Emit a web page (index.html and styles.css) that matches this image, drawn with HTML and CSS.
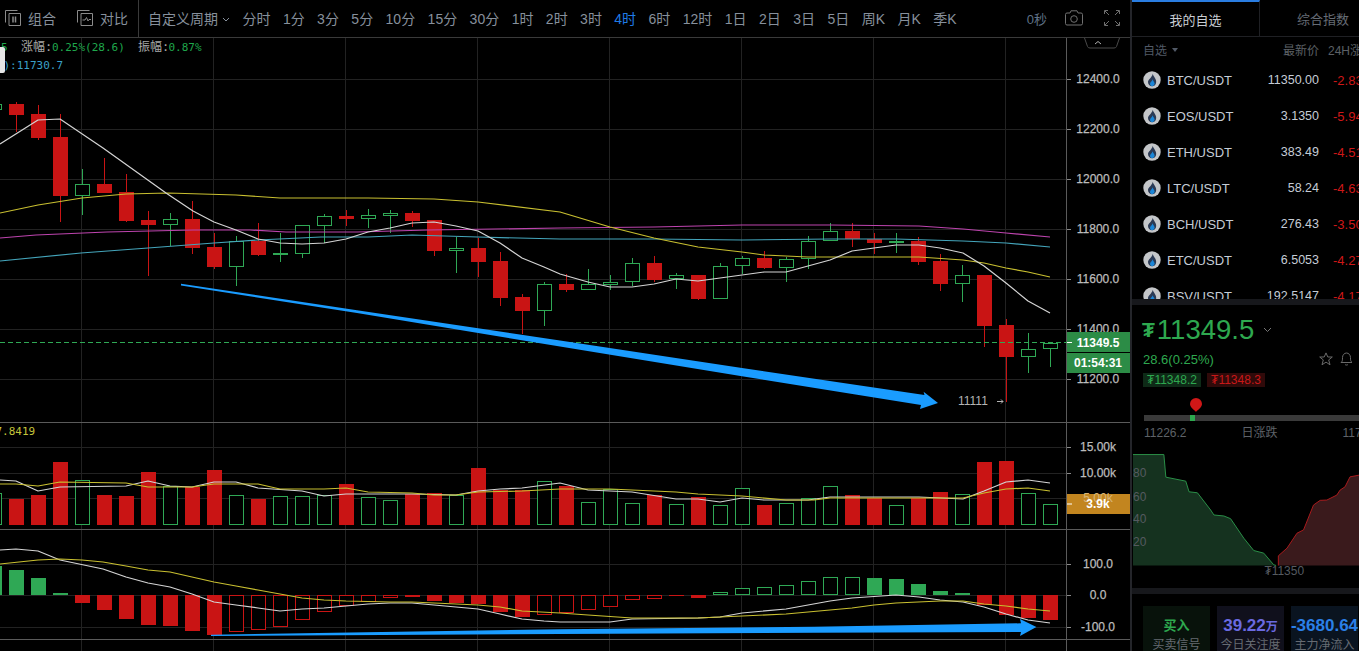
FILE: index.html
```html
<!DOCTYPE html>
<html lang="zh">
<head>
<meta charset="utf-8">
<title>BTC/USDT</title>
<link rel="stylesheet" href="styles.css">
</head>
<body>
<svg class="defs" width="0" height="0" aria-hidden="true">
  <symbol id="coin" viewBox="0 0 18 18">
    <circle cx="9" cy="9" r="8.7" fill="#c4c6c9"/>
    <path d="M9.8 2.8C10.2 5.6 13.2 7.4 13.2 10.9 13.2 13.6 11.2 15.2 9 15.2 6.8 15.2 5 13.6 5 11 5 8.4 8.9 6.8 9.8 2.8Z" fill="#2b3a55"/>
    <path d="M9.6 8.2C10 9.9 11.6 10.9 11.6 12.6 11.6 14.1 10.4 15.2 9.2 15.2 8 15.2 7 14.1 7 12.9 7 11 9.1 10.4 9.6 8.2Z" fill="#1a86d8"/>
  </symbol>
</svg>
<div class="app">
  <main class="main">
    <header class="toolbar">
      <div class="tools">
        <div class="tool">
          <svg class="tool-icon" viewBox="0 0 16 16"><path d="M12.5.5H.5V12.5M4 3.5H15.500V15.500H4Z" fill="none" stroke="#8b8b8b"/><path d="M8 6.500V12.500M10.500 6.500V12.500" stroke="#8b8b8b" stroke-width="1.500"/></svg>
          <span>组合</span>
        </div>
        <div class="tool tool-second">
          <svg class="tool-icon" viewBox="0 0 16 16"><path d="M12.500.5H.5V12.500M4 3.500H15.500V15.500H4Z" fill="none" stroke="#8b8b8b"/><path d="M5.500 10H8L9.500 7.500 11 11 12 9.500H14" fill="none" stroke="#8b8b8b"/></svg>
          <span>对比</span>
        </div>
      </div>
      <nav class="periods">
        <span class="custom">自定义周期<svg class="chevron" viewBox="0 0 8 5"><path d="M1 1L4 4 7 1" fill="none" stroke="#87909c"/></svg></span>
        <span>分时</span><span>1分</span><span>3分</span><span>5分</span><span>10分</span><span>15分</span><span>30分</span><span>1时</span><span>2时</span><span>3时</span><span class="active">4时</span><span>6时</span><span>12时</span><span>1日</span><span>2日</span><span>3日</span><span>5日</span><span>周K</span><span>月K</span><span>季K</span>
      </nav>
      <div class="tool-right">
        <span class="seconds">0秒</span>
        <svg class="camera" viewBox="0 0 20 16"><path d="M1.500 4.500A1.500 1.500 0 0 1 3 3H6L7 .8H13L14 3H17A1.500 1.500 0 0 1 18.500 4.500V13.500A1.500 1.500 0 0 1 17 15H3A1.500 1.500 0 0 1 1.500 13.500Z" fill="none" stroke="#707070"/><circle cx="10" cy="9" r="3.300" fill="none" stroke="#707070"/></svg>
        <svg class="expand" viewBox="0 0 16 16"><path d="M.5 4V.5H4M12 .5H15.500V4M.5 12V15.500H4M12 15.500H15.500V12M1 1L5 5M15 1L11 5M1 15L5 11M15 15L11 11" fill="none" stroke="#6e6e6e"/></svg>
      </div>
    </header>
    <div class="chart">
      <svg id="plot" class="plot" viewBox="0 38 1130 613"></svg>
    </div>
  </main>
  <aside class="side">
    <div class="tabs">
      <div class="tab tab-active">我的自选</div>
      <div class="tab">综合指数</div>
    </div>
    <section class="market">
      <div class="market-head">
        <span class="head-own">自选<i class="caret"></i></span>
        <span class="head-price">最新价</span>
        <span class="head-change">24H涨跌</span>
      </div>
      <div class="row"><svg class="coin"><use href="#coin"/></svg><span class="name">BTC/USDT</span><span class="price">11350.00</span><span class="change">-2.83%</span></div>
      <div class="row"><svg class="coin"><use href="#coin"/></svg><span class="name">EOS/USDT</span><span class="price">3.1350</span><span class="change">-5.94%</span></div>
      <div class="row"><svg class="coin"><use href="#coin"/></svg><span class="name">ETH/USDT</span><span class="price">383.49</span><span class="change">-4.51%</span></div>
      <div class="row"><svg class="coin"><use href="#coin"/></svg><span class="name">LTC/USDT</span><span class="price">58.24</span><span class="change">-4.63%</span></div>
      <div class="row"><svg class="coin"><use href="#coin"/></svg><span class="name">BCH/USDT</span><span class="price">276.43</span><span class="change">-3.50%</span></div>
      <div class="row"><svg class="coin"><use href="#coin"/></svg><span class="name">ETC/USDT</span><span class="price">6.5053</span><span class="change">-4.27%</span></div>
      <div class="row"><svg class="coin"><use href="#coin"/></svg><span class="name">BSV/USDT</span><span class="price">192.5147</span><span class="change">-4.17%</span></div>
    </section>
    <div class="gutter"></div>
    <section class="quote">
      <div class="big-price"><span class="tug">₮</span><span>11349.5</span><svg class="big-chevron" viewBox="0 0 9 6"><path d="M1 1L4.500 4.500 8 1" fill="none" stroke="#777"/></svg></div>
      <div class="delta">
        <span>28.6(0.25%)</span>
        <svg class="star" viewBox="0 0 14 14"><path d="M7 .9L8.800 5H13.300L9.700 7.900 11 12.800 7 10.100 3 12.800 4.300 7.900.7 5H5.200Z" fill="none" stroke="#6a6a6a"/></svg>
        <svg class="bell" viewBox="0 0 13 14"><path d="M1 10.500C2.500 9.500 2.500 8 2.500 5.500 2.500 3 4.300 1 6.500 1S10.500 3 10.500 5.500C10.500 8 10.500 9.500 12 10.500ZM5 12.300C5.500 13.300 7.500 13.300 8 12.300" fill="none" stroke="#6a6a6a"/></svg>
      </div>
      <div class="badges"><span class="badge badge-buy">₮11348.2</span><span class="badge badge-sell">₮11348.3</span></div>
      <div class="range">
        <span class="range-mark"></span>
        <svg class="pin" viewBox="0 0 12 14"><path d="M6 14C5 12.500 0 9.500 0 6A6 6 0 0 1 12 6C12 9.500 7 12.500 6 14Z" fill="#d01717"/></svg>
      </div>
      <div class="range-labels"><span>11226.2</span><span class="label-mid">日涨跌</span><span class="label-end">11718.5</span></div>
      <svg class="depth" viewBox="1131 439 228 149">
        <path class="depth-buy" d="M1132 454.300H1163L1165 477 1185 481 1188.300 491.700 1196.700 492.700 1210 510 1213.300 515 1223.300 516 1230 518.700 1243.300 538.300 1253.300 550.700 1263.300 553.300 1273.300 565 1275.700 565.700H1132Z"/>
        <path class="depth-buy-line" d="M1132 454.300H1163L1165 477 1185 481 1188.300 491.700 1196.700 492.700 1210 510 1213.300 515 1223.300 516 1230 518.700 1243.300 538.300 1253.300 550.700 1263.300 553.300 1273.300 565 1275.700 565.700"/>
        <path class="depth-sell" d="M1278 565.700V556L1286.700 548.300 1296.700 533.300 1303.300 530 1313.300 505 1320 500.300 1326.700 500 1336.700 495 1340 490 1345 486.700 1350 476.700 1359 475V565.700Z"/>
        <path class="depth-sell-line" d="M1278 565.700V556L1286.700 548.300 1296.700 533.300 1303.300 530 1313.300 505 1320 500.300 1326.700 500 1336.700 495 1340 490 1345 486.700 1350 476.700 1359 475"/>
        <g class="depth-labels"><text x="1132" y="477">80</text><text x="1132" y="501">60</text><text x="1132" y="523">40</text><text x="1132" y="546">20</text><text x="1264" y="575">₮11350</text></g>
      </svg>
    </section>
    <div class="gutter"></div>
    <section class="cards">
      <div class="card card-buy"><strong>买入</strong><span>买卖信号</span></div>
      <div class="card card-focus"><strong>39.22<small>万</small></strong><span>今日关注度</span></div>
      <div class="card card-flow"><strong>-3680.64</strong><span>主力净流入</span></div>
    </section>
  </aside>
</div>
<script src="chart.js"></script>
</body>
</html>
```
FILE: styles.css
```css
* { box-sizing: border-box; }
html, body { margin: 0; height: 100%; background: #000; overflow: hidden; }
body { font-family: "Liberation Sans", "Noto Sans CJK SC", sans-serif; color: #87909c; }
.defs { display: block; height: 0; }
.app { display: flex; width: 1359px; height: 651px; overflow: hidden; }

.main { width: 1130px; flex: none; display: flex; flex-direction: column; }
.toolbar { height: 38px; flex: none; display: flex; align-items: stretch; border-bottom: 1px solid #3a3a3a; font-size: 14px; white-space: nowrap; }
.tools { display: flex; align-items: center; padding: 0 10px 1px 5px; border-right: 1px solid #3a3a3a; }
.tool { display: flex; align-items: center; gap: 7px; }
.tool-second { margin-left: 21px; }
.tool-icon { width: 16px; height: 16px; display: block; }
.periods { display: flex; align-items: center; gap: 12.45px; padding: 0 0 1px 9px; }
.custom { display: flex; align-items: center; }
.chevron { width: 8px; height: 5px; margin-left: 4px; margin-top: 2px; }
.active { color: #1f7be6; }
.tool-right { margin-left: auto; display: flex; align-items: center; padding: 0 10px 1px 0; }
.seconds { font-size: 13px; color: #5f7186; margin-right: 17px; }
.camera { width: 20px; height: 16px; margin-right: 20px; }
.expand { width: 16px; height: 16px; }

.chart { position: relative; flex: 1; min-height: 0; overflow: hidden; }
.plot { display: block; width: 1130px; height: 613px; }
.grid { stroke: #222; stroke-width: 1; }
.rule { stroke: #5a5a5a; stroke-width: 1; }
.tick { stroke: #8a8a8a; stroke-width: 1; }
.line { fill: none; stroke-width: 1.2; stroke-linejoin: round; }
.l-white { stroke: #d4d4d4; }
.l-yellow { stroke: #c8bf30; }
.l-magenta { stroke: #bd44ae; }
.l-cyan { stroke: #44a5bb; }
.last { stroke: #2fa855; stroke-dasharray: 5 3; }
.up-fill { fill: #c91414; }
.up-wick { stroke: #c91414; }
.dn-fill { fill: #2fa855; }
.dn-wick { stroke: #2fa855; }
.dn-hollow { fill: #000; stroke: #2fa855; }
.up-hollow { fill: #000; stroke: #c91414; }
.arrow { fill: #1a9cff; }
.axis { font-size: 12px; fill: #bcbcbc; stroke: #bcbcbc; stroke-width: .25px; text-anchor: middle; }
.axis-strong { font-size: 12px; font-weight: 700; fill: #fff; text-anchor: middle; }
.axis-faint { font-size: 12px; fill: #d8b678; text-anchor: middle; }
.tag-green { fill: #2c8c46; }
.tag-orange { fill: #c2851f; }
.legend { font-family: "DejaVu Sans Mono", "Noto Sans CJK SC", monospace; font-size: 11px; }
.leg-label { fill: #a8a8a8; font-size: 12px; }
.leg-green { fill: #1fa84c; }
.leg-cyan { fill: #3ba0c8; }
.leg-yellow { fill: #c4c43a; }
.leg-blob { fill: #e6e6e6; }
.note { font-size: 12px; fill: #b4b4b4; }
.note-arrow { fill: none; stroke: #b4b4b4; }
.tab-notch { fill: #000; stroke: #4a4a4a; }
.tab-caret { fill: none; stroke: #b0b0b0; }

.side { width: 229px; flex: none; border-left: 2px solid #24252a; overflow: hidden; font-size: 13px; }
.tabs { display: flex; height: 37px; border-bottom: 1px solid #1f2024; }
.tab { width: 126px; flex: none; display: flex; align-items: center; justify-content: center; color: #666c75; }
.tab-active { width: 128px; color: #c8ccd2; border-top: 2px solid #2a7de1; border-right: 1px solid #1f2024; }
.market { height: 262px; overflow: hidden; }
.market-head { display: flex; align-items: center; height: 25px; font-size: 12px; padding-left: 11px; white-space: nowrap; color: #5c6066; }
.head-own { color: #515966; display: flex; align-items: center; width: 140px; flex: none; }
.caret { width: 0; height: 0; margin-left: 5px; border: 3.5px solid transparent; border-top: 4px solid #515966; border-bottom: 0; }
.head-price { width: 36px; flex: none; }
.head-change { margin-left: 9px; flex: none; }
.row { display: flex; align-items: center; height: 36px; padding-left: 11px; white-space: nowrap; color: #c5ccd6; }
.coin { width: 18px; height: 18px; flex: none; margin-right: 6px; }
.name { width: 70px; flex: none; }
.price { width: 82px; flex: none; text-align: right; font-size: 12.5px; }
.change { margin-left: 14px; color: #cf1818; }
.gutter { height: 6px; background: #17181c; }

.quote { height: 283px; padding-top: 10px; }
.big-price { display: flex; align-items: center; height: 30px; padding-left: 10px; font-size: 27.5px; color: #2ea84f; }
.tug { font-size: 21px; font-weight: 700; margin-right: 2px; }
.big-chevron { width: 9px; height: 6px; margin-left: 9px; }
.delta { display: flex; align-items: center; height: 16px; margin-top: 6px; padding: 0 6px 0 11px; color: #2ea84f; }
.star { width: 14px; height: 14px; margin-left: auto; }
.bell { width: 13px; height: 14px; margin-left: 7px; }
.badges { display: flex; gap: 6px; margin-top: 6px; padding-left: 11px; }
.badge { width: 58px; height: 14px; font-size: 12px; line-height: 14px; text-align: center; white-space: nowrap; }
.badge-buy { background: #0e2a17; color: #2ea84f; }
.badge-sell { background: #300a0a; color: #c81818; }
.range { position: relative; height: 6px; margin: 28px 0 0 12px; background: #3a3a3a; }
.range-mark { position: absolute; left: 46px; top: 0; width: 5px; height: 6px; background: #2ea84f; }
.pin { position: absolute; left: 46px; top: -17px; width: 12px; height: 14px; }
.range-labels { display: flex; height: 14px; margin: 5px 0 -1px 12px; font-size: 12px; line-height: 14px; color: #5e6268; white-space: nowrap; }
.label-mid { margin-left: 55px; }
.label-end { margin-left: 65px; }
.depth { display: block; width: 227px; height: 149px; }
.depth-buy { fill: #15321f; }
.depth-buy-line { fill: none; stroke: #2a8f48; }
.depth-sell { fill: #3a1a1c; }
.depth-sell-line { fill: none; stroke: #a81a1c; }
.depth-labels { font-size: 12px; fill: #555a60; }

.cards { display: flex; gap: 7px; padding: 12px 0 0 11px; }
.card { width: 67px; height: 60px; flex: none; display: flex; flex-direction: column; align-items: center; padding-top: 12px; white-space: nowrap; font-size: 12px; color: #666b72; }
.card strong { font-size: 17px; line-height: 16px; height: 16px; }
.card span { line-height: 16px; margin-top: 3px; }
.card small { font-size: 12px; }
.card-buy { background: #08120b; }
.card-buy strong { color: #2ea84f; font-size: 13px; }
.card-focus { background: #10101c; }
.card-focus strong { color: #6a6ae0; }
.card-flow { background: #0a1420; }
.card-flow strong { color: #2a80e8; }
```
FILE: chart.js
```js
(function () {
  var NS = 'http://www.w3.org/2000/svg';
  var svg = document.getElementById('plot');
  function el(tag, cls, attrs, text) {
    var n = document.createElementNS(NS, tag);
    if (cls) n.setAttribute('class', cls);
    for (var k in attrs) n.setAttribute(k, attrs[k]);
    if (text !== undefined) n.textContent = text;
    svg.appendChild(n);
    return n;
  }
  function hline(cls, y, x2) { el('line', cls, { x1: 0, x2: x2 || 1067, y1: y + .5, y2: y + .5 }); }
  function poly(cls, pts) { el('polyline', 'line ' + cls, { points: pts }); }
  function cx(i) { return Math.floor(16.4 + 22 * i); }

  // grid
  [81, 213, 345, 477, 609, 741, 873, 1005].forEach(function (x) {
    el('line', 'grid', { x1: x + .5, x2: x + .5, y1: 38, y2: 651 });
  });
  [79, 129, 179, 229, 279, 329, 379, 447, 473, 498, 564, 595, 627].forEach(function (y) { hline('grid', y); });
  hline('rule', 422, 1130); hline('rule', 529, 1130); hline('rule', 639, 1130);
  el('line', 'rule', { x1: 1066.5, x2: 1066.5, y1: 38, y2: 651 });

  // candles: high, top, bottom, low, r/g
  var C = [
    [102,104,115,132,'r'],[105,114,138,140,'r'],[114,137,196,222,'r'],[169,184,196,215,'g'],
    [158,184,193,193,'r'],[174,192,221,222,'r'],[211,220,225,276,'r'],[213,219,225,246,'g'],
    [201,219,248,254,'r'],[233,247,267,269,'r'],[236,241,267,286,'g'],[223,241,255,256,'r'],
    [233,253,255,262,'g'],[225,225,254,258,'g'],[214,216,226,243,'g'],[210,216,219,226,'r'],
    [209,215,219,228,'g'],[210,213,216,233,'g'],[211,213,221,227,'r'],[220,220,251,256,'r'],
    [237,248,251,273,'g'],[238,248,262,277,'r'],[252,261,298,306,'r'],[294,297,311,334,'r'],
    [282,284,311,326,'g'],[274,284,290,292,'r'],[269,284,290,290,'g'],[275,282,285,290,'g'],
    [258,263,282,286,'g'],[256,263,280,282,'r'],[273,275,279,289,'g'],[275,275,299,300,'r'],
    [263,266,299,299,'g'],[256,258,266,274,'g'],[251,258,268,269,'r'],[257,259,268,282,'g'],
    [236,241,259,269,'g'],[223,231,241,241,'g'],[223,231,239,247,'r'],[233,239,243,254,'r'],
    [233,241,243,253,'g'],[237,241,262,265,'r'],[254,261,284,291,'r'],[265,275,284,302,'g'],
    [275,275,326,347,'r'],[319,325,357,402,'r'],[333,349,357,373,'g'],[342,343,349,367,'g']
  ];

  // volume tops, index -1 first
  var V = [493,499,495,462,480,495,496,472,486,487,470,495,499,496,496,495,484,497,500,494,493,495,468,490,490,481,486,502,489,503,495,504,497,505,488,505,503,498,486,495,498,505,498,492,494,462,461,493,504];
  // macd ends, index -1 first
  var M = [566,570,578,593,603,610,619,625,626,631,635,632,630,627,620,612,606,602,598,597,601,603,604,612,617,615,613,610,607,600,599,596,598,592,588,587,585,581,577,577,578,579,584,591,593,605,615,618,620];
  var MH = { 10:1,11:1,12:1,13:1,14:1,15:1,16:1,17:1,24:1,25:1,26:1,27:1,28:1,29:1,32:1,33:1,34:1,35:1,36:1,37:1,38:1 };

  function body(i, top, bot, red, hollow) {
    var x = cx(i);
    if (hollow) el('rect', red ? 'up-hollow' : 'dn-hollow', { x: x - 6.5, y: top + .5, width: 14, height: Math.max(bot - top - 1, 1) });
    else el('rect', red ? 'up-fill' : 'dn-fill', { x: x - 7, y: top, width: 15, height: bot - top });
  }

  // volume
  V.forEach(function (t, n) {
    var i = n - 1, red = i >= 0 && C[i][4] === 'r';
    body(i, t, 525, red, !red);
  });
  // macd
  M.forEach(function (v, n) {
    var i = n - 1, hollow = !!MH[i];
    if (v < 595) body(i, v, 595, false, hollow);
    else body(i, 595, v, true, hollow);
  });

  // candles
  el('rect', 'dn-hollow', { x: -12.5, y: 104.5, width: 14, height: 5 });
  C.forEach(function (c, i) {
    var red = c[4] === 'r', x = cx(i) + .5;
    el('line', red ? 'up-wick' : 'dn-wick', { x1: x, x2: x, y1: c[0], y2: c[3] });
    body(i, c[1], c[2], red, !red && c[2] - c[1] > 2);
  });

  // moving averages
  poly('l-magenta', '0,238 36,235 107,232 193,230 250,230 286,232 357,232 428,230 560,228 654,227 742,225 830,225 919,226 963,229 1006,233 1050,237');
  poly('l-cyan', '0,261 81,253 148,248 214,243 258,240 321,237 368,237 412,235 478,237 560,239 654,239 742,240 830,239 896,239 963,241 1006,243 1050,247');
  poly('l-yellow', '0,213 38,205 82,198 126,194 168,193 236,195 280,198 368,198 434,199 478,202 560,212 610,227 654,238 698,247 742,252 764,255 808,257 852,257 919,257 963,260 984,263 1006,268 1028,272 1050,277');
  poly('l-white', '0,144 38,120 60,119 103,148 166,193 193,211 214,222 236,230 258,239 280,243 302,244 324,243 346,239 368,232 390,228 412,223 434,222 456,226 478,231 500,243 522,258 544,267 560,274 588,282 610,287 632,287 654,284 676,279 698,281 720,278 742,275 764,272 786,272 808,266 830,260 852,251 874,248 896,245 919,245 940,248 963,253 984,266 1006,283 1028,301 1050,313');
  poly('l-white', '0,480 16,481 38,491 60,487 126,486 148,481 170,486 192,487 214,482 236,482 258,488 302,491 324,496 346,494 412,494 456,495 478,491 500,489 522,488 560,483 588,490 632,492 676,499 698,499 720,502 742,498 764,500 808,500 830,497 919,497 963,499 984,491 1006,482 1028,480 1050,483');
  poly('l-yellow', '0,484 16,484 38,486 60,482 126,483 148,487 192,487 214,484 258,484 280,489 324,489 346,488 368,492 412,493 434,495 456,495 478,492 522,491 560,489 610,489 676,492 698,494 742,496 786,500 814,500 830,498 963,498 984,493 1006,489 1028,488 1050,491');
  poly('l-white', '0,550 16,549 38,551 60,560 103,569 126,577 148,583 170,587 192,594 214,602 236,605 258,608 280,611 302,609 324,608 346,606 368,604 390,603 412,603 434,605 456,607 478,609 500,614 522,619 544,621 560,622 610,622 632,619 698,618 720,617 742,613 786,609 830,601 852,598 896,595 919,597 940,600 963,602 984,607 1006,614 1028,620 1050,623');
  poly('l-yellow', '0,564 38,560 60,559 82,560 103,562 126,566 148,570 170,572 192,577 214,582 236,586 258,590 280,594 302,598 324,600 346,601 390,602 412,602 456,604 478,605 500,607 522,611 560,613 588,615 632,618 698,618 720,617 786,614 830,610 852,608 874,605 896,603 940,601 963,601 984,604 1006,606 1028,609 1050,611');

  // last price line and hand drawn arrows
  el('line', 'last', { x1: 0, x2: 1067, y1: 342.5, y2: 342.5 });
  el('polygon', 'arrow', { points: '181,283.700 357,310.300 560,340.500 742,368 924.500,395 923.600,391.700 938,403 920,409 921,405 742,376.300 560,346.500 357,313 181,285.500' });
  el('polygon', 'arrow', { points: '211,634.700 560,629.300 814,626.700 1021,623.300 1020,619 1036.400,627 1020,636 1021,632 814,632.700 560,634 211,636' });

  // axis labels
  [[12400,79],[12200,129],[12000,179],[11800,229],[11600,279],[11400,329],[11200,379]].forEach(function (a) {
    el('line', 'tick', { x1: 1067, x2: 1071, y1: a[1] + .5, y2: a[1] + .5 });
    el('text', 'axis', { x: 1098, y: a[1] + 4 }, a[0] + '.0');
  });
  [['15.00k',447],['10.00k',473],['100.0',564],['0.0',595],['-100.0',627]].forEach(function (a) {
    el('line', 'tick', { x1: 1067, x2: 1071, y1: a[1] + .5, y2: a[1] + .5 });
    el('text', 'axis', { x: 1098, y: a[1] + 4 }, a[0]);
  });
  el('rect', 'tag-green', { x: 1067, y: 332, width: 63, height: 20 });
  el('rect', 'tag-green', { x: 1067, y: 353, width: 63, height: 20 });
  el('line', 'tick-white', { x1: 1067, x2: 1072, y1: 342.5, y2: 342.5, stroke: '#fff' });
  el('text', 'axis-strong', { x: 1098, y: 346.500 }, '11349.5');
  el('text', 'axis-strong', { x: 1098, y: 367 }, '01:54:31');
  el('rect', 'tag-orange', { x: 1067, y: 494, width: 63, height: 20 });
  el('text', 'axis-faint', { x: 1098, y: 502 }, '5.00k');
  el('line', 'tick-white', { x1: 1067, x2: 1072, y1: 504, y2: 504, stroke: '#fff' });
  el('text', 'axis-strong', { x: 1098, y: 508 }, '3.9k');

  // collapse notch
  el('path', 'tab-notch', { d: 'M1084.500 38L1087.500 46.500Q1088 48 1090 48H1114Q1116 48 1116.500 46.500L1119.500 38' });
  el('path', 'tab-caret', { d: 'M1095 44L1098 41.500 1101 44' });

  // legend
  el('text', 'legend leg-green', { x: 1, y: 51 }, '5');
  el('text', 'legend leg-label', { x: 21, y: 51 }, '涨幅:');
  el('text', 'legend leg-green', { x: 52, y: 51 }, '0.25%(28.6)');
  el('text', 'legend leg-label', { x: 138, y: 51 }, '振幅:');
  el('text', 'legend leg-green', { x: 168.500, y: 51 }, '0.87%');
  el('text', 'legend leg-cyan', { x: 3.500, y: 69 }, '):11730.7');
  el('text', 'legend leg-yellow', { x: -4.500, y: 435 }, '7.8419');
  el('rect', 'leg-blob', { x: -4, y: 47, width: 9, height: 26, rx: 2 });

  // price note
  el('text', 'note', { x: 958, y: 405 }, '11111');
  el('path', 'note-arrow', { d: 'M997 401.500H1003M1001 399.500L1003 401.500 1001 403.500' });
})();
```
